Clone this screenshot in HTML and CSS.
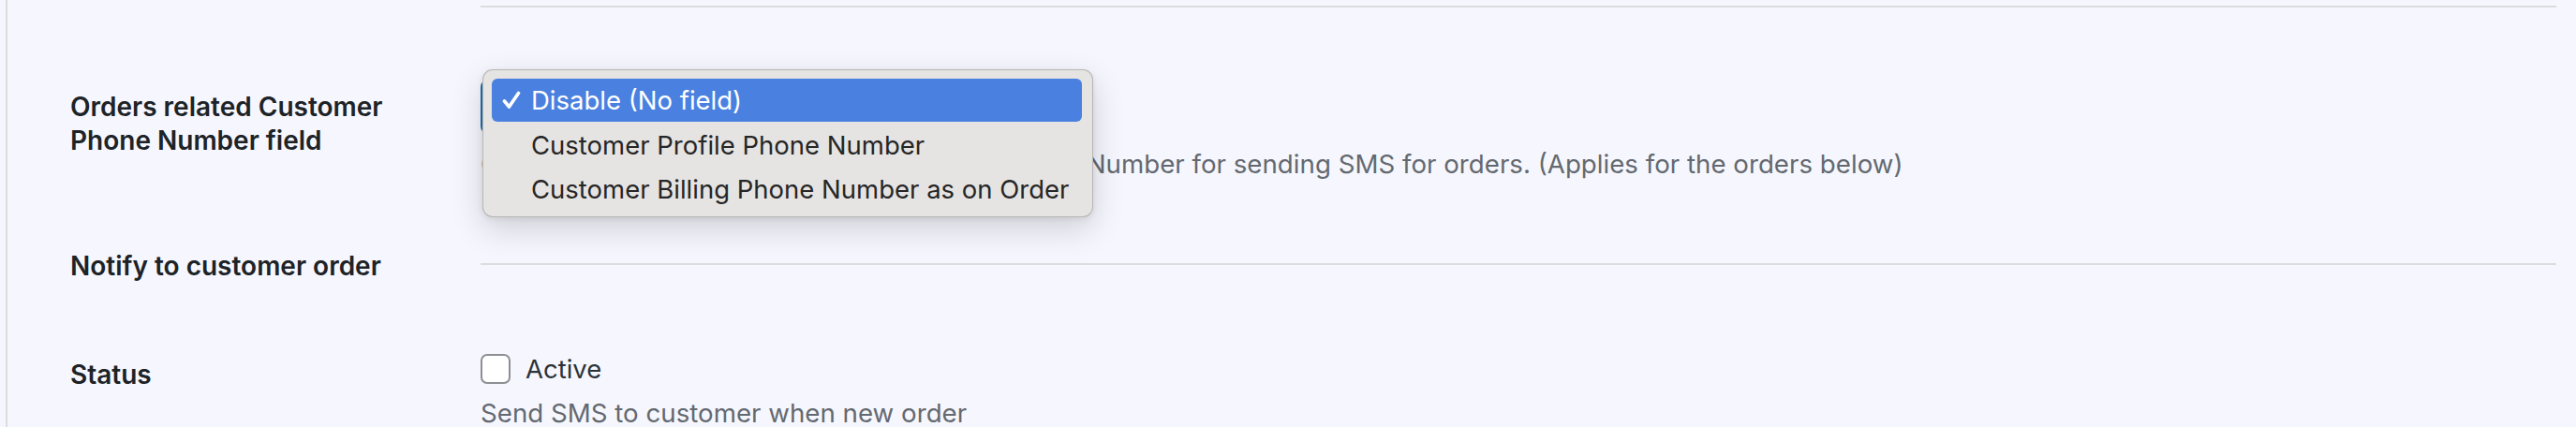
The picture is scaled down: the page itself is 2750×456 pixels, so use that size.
FILE: index.html
```html
<!DOCTYPE html>
<html lang="en">
<head>
<meta charset="utf-8">
<title>SMS settings</title>
<link rel="stylesheet" href="styles.css">
</head>
<body>
<div class="form">
  <div class="cell label-cell top-label"></div>
  <div class="cell field-cell top-field"><div class="rule"></div></div>

  <div class="cell label-cell row1-label">Orders related Customer<br>Phone Number field</div>
  <div class="cell field-cell row1-field">
    <div class="select-wrap">
      <div class="select">Disable (No field)</div>
      <div class="menu">
        <div class="item selected"><span class="check"><svg viewBox="0 0 20 20" width="20" height="20"><path d="M2.5 11 L7.5 17 L17.5 2.5" fill="none" stroke="#fff" stroke-width="3.6" stroke-linecap="round" stroke-linejoin="round"/></svg></span>Disable (No field)</div>
        <div class="item"><span class="check"></span>Customer Profile Phone Number</div>
        <div class="item"><span class="check"></span>Customer Billing Phone Number as on Order</div>
      </div>
    </div>
    <p class="desc">Choose the field to use as the Customer's Phone Number for sending SMS for orders. (Applies for the orders below)</p>
  </div>

  <div class="cell label-cell row2-label">Notify to customer order</div>
  <div class="cell field-cell row2-field"><div class="rule"></div></div>

  <div class="cell label-cell row3-label">Status</div>
  <div class="cell field-cell row3-field">
    <label class="checkline"><span class="box"></span><span class="check-text">Active</span></label>
    <p class="desc desc-status">Send SMS to customer when new order</p>
  </div>
</div>
</body>
</html>
```

FILE: styles.css
```css
html, body {
  margin: 0;
  padding: 0;
  background: #f6f7fe;
  height: 456px;
  overflow: hidden;
}

body {
  font-family: Inter, "Liberation Sans", Arial, sans-serif;
  color: #1d2327;
}

.form {
  margin-left: 6px;
  border-left: 2px solid #dcdcde;
  display: grid;
  grid-template-columns: 505px 1fr;
  padding-right: 21px;
  min-height: 456px;
  box-sizing: border-box;
}

.cell {
  box-sizing: border-box;
}

.label-cell {
  padding-left: 67px;
  font-size: 28px;
  line-height: 36px;
  font-weight: 600;
  color: #1d2327;
}

.rule {
  height: 0;
  border-top: 2px solid #dcdcde;
}

.top-field {
  padding-top: 6px;
}

.row1-label {
  padding-top: 88px;
}

.row1-field {
  padding-top: 77px;
  padding-bottom: 37px;
}

.select-wrap {
  position: relative;
  height: 58px;
}

.select {
  box-sizing: border-box;
  width: 620px;
  height: 58px;
  border: 2px solid #2271b1;
  border-radius: 8px;
  background: #fff;
  font-size: 27px;
  line-height: 54px;
  padding-left: 16px;
  color: #2c3338;
}

.menu {
  position: absolute;
  left: 2px;
  top: -11px;
  width: 652px;
  height: 158px;
  box-sizing: border-box;
  background: #e6e4e2;
  border: 1px solid rgba(0, 0, 0, 0.2);
  border-radius: 11px;
  padding: 9px 11px 0 9px;
  box-shadow: 0 12px 34px rgba(0, 0, 0, 0.16), 0 2px 6px rgba(0, 0, 0, 0.08);
  font-size: 27.5px;
  color: #262626;
}

.item {
  display: flex;
  align-items: center;
  height: 47px;
  padding-left: 11px;
  border-radius: 6px;
  white-space: nowrap;
}

.item.selected {
  height: 46px;
  margin-bottom: 1px;
  background: #4a81e0;
  color: #fff;
}

.check {
  display: inline-flex;
  width: 31px;
  flex: none;
  align-items: center;
}

.desc {
  margin: 14px 0 0;
  font-size: 27.7px;
  line-height: 36px;
  color: #646970;
  white-space: nowrap;
}

.row2-label {
  padding-top: 36px;
  padding-bottom: 38px;
}

.row2-field {
  padding-top: 51px;
}

.row3-label {
  padding-top: 42px;
}

.row3-field {
  padding-top: 36px;
}

.checkline {
  display: flex;
  align-items: center;
  height: 36px;
  font-size: 27.5px;
  line-height: 36px;
  color: #2c3338;
}

.box {
  box-sizing: border-box;
  width: 32px;
  height: 32px;
  border: 2px solid #8c8f94;
  border-radius: 7px;
  background: #fff;
  margin-right: 16px;
  flex: none;
}

.desc-status {
  margin-top: 11px;
}
```
